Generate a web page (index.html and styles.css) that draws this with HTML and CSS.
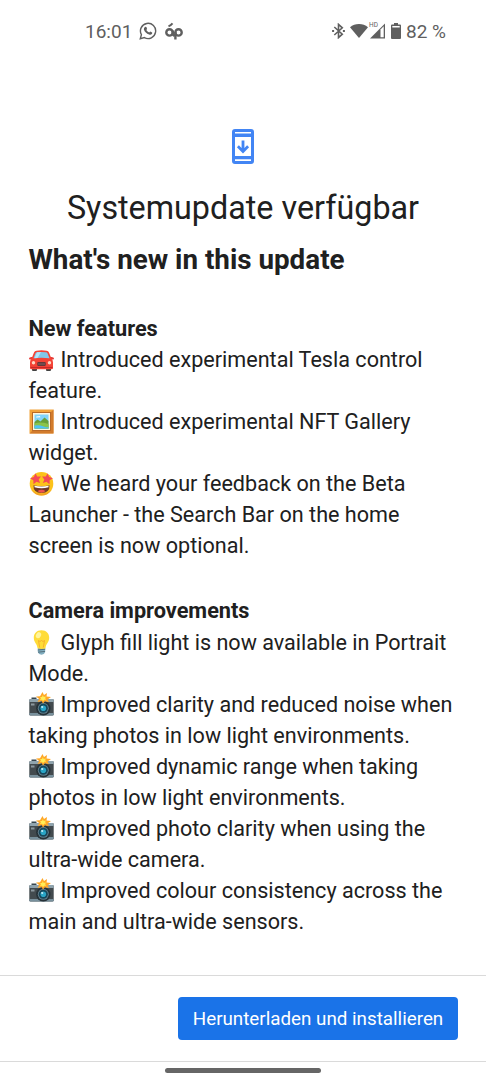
FILE: index.html
```html
<!DOCTYPE html>
<html lang="de">
<head>
	<meta charset="utf-8">
	<title>Systemupdate</title>
	<link rel="stylesheet" href="styles.css">
</head>
<body>
	<!-- emoji symbols -->
	<svg class="defs" width="0" height="0">
		<symbol id="car" viewBox="0 0 25 25">
			<path d="M3 19h5v4a1 1 0 0 1-1 1H4a1 1 0 0 1-1-1zM17 19h5v4a1 1 0 0 1-1 1h-3a1 1 0 0 1-1-1z" fill="#424242"/>
			<path d="M0 11.500q0-1.500 2.500-1.500h1.500v2.500H1q-1 0-1-1zM25 11.500q0-1.500-2.500-1.500H21v2.500h3q1 0 1-1z" fill="#e53935"/>
			<path d="M5 5.500Q5.600 4 7.500 3.700q5-.7 10 0 1.900.3 2.500 1.800l2.400 6q1.600 1.500 1.600 4V21q0 1.300-1.500 1.300h-20Q1 22.300 1 21v-5.500q0-2.500 1.600-4z" fill="#f44336"/>
			<path d="M6.500 6.200Q7 5.300 8 5.200q4.500-.6 9 0 1 .1 1.500 1l2 5.100q-8-1.300-16 0z" fill="#82c7e8"/>
			<path d="M8 5.300l4-.4-3.500 6-3 .3z" fill="#b3e5fc"/>
			<rect x="8.300" y="15" width="8.400" height="4" rx="1" fill="#5f3336"/>
			<path d="M9 16.300h7M9 17.700h7" stroke="#85686a" stroke-width=".6"/>
			<circle cx="4.500" cy="15.800" r="1.700" fill="#ffd9c4"/><circle cx="20.500" cy="15.800" r="1.700" fill="#ffd9c4"/>
			<path d="M1.500 20.500h22" stroke="#c62828" stroke-width="1.200"/>
		</symbol>
		<symbol id="frame" viewBox="0 0 25 25">
			<rect x=".5" y=".5" width="24" height="24" fill="#f2a33a"/>
			<path d="M.5 24.500l3.500-3.500h17l3.500 3.500zM24.500.5v24L21 21V4z" fill="#d27b2c"/>
			<rect x="3" y="3" width="19" height="19" fill="#b96a27"/>
			<rect x="4" y="4" width="17" height="17" fill="#fff7df"/>
			<rect x="5.500" y="5.500" width="14" height="14" fill="#81d4fa"/>
			<path d="M5.500 13l3-2.500 3 2 4-4 4 3.500v7.500h-14z" fill="#689f38"/>
			<path d="M5.500 14.500q6-2 14 .5v4.500h-14z" fill="#8bc34a"/>
			<path d="M5.500 16.500q5-1 8.500.7t5.500.8v1.500h-14z" fill="#4fc3f7"/>
			<path d="M7 8.500q.5-1.600 2-1 1.700-1.200 2.500.8z" fill="#fff"/>
		</symbol>
		<symbol id="starstruck" viewBox="0 0 25 25">
			<circle cx="12.500" cy="12.700" r="11.800" fill="#fcc21b"/>
			<path d="M2.500 19q3.500 5.500 10 5.500T22.500 19q-4.500 3.500-10 3.500T2.500 19z" fill="#f3a321"/>
			<path d="M4.500 14.200q8 2 16 0 .5 7.500-8 7.800-8.500-.3-8-7.800z" fill="#703b27"/>
			<path d="M5.500 14.700q7 1.500 14 0v1.600q-7 2.100-14 0z" fill="#fff"/>
			<path d="M8.500 20q4-2.400 8 0-1.800 1.700-4 1.700t-4-1.700z" fill="#ef5350"/>
			<path d="M6.500 2.200l1.700 3.400 3.800-.2-2.300 3 1.400 3.500-3.600-1.100-3 2.400-.2-3.900L1 7.300l3.800-1.200z" fill="#f44b55"/>
			<path d="M18.500 2.200l-1.700 3.400-3.800-.2 2.300 3-1.400 3.500 3.600-1.100 3 2.400.2-3.900L24 7.300l-3.800-1.200z" fill="#f44b55"/>
		</symbol>
		<symbol id="bulb" viewBox="0 0 25 25">
			<path d="M8.800 18h7.400v4q-.8 2.700-3.700 2.800-2.900-.1-3.700-2.800z" fill="#82aec0"/>
			<path d="M8.800 20l7.400-.8M9 22.200l7-.8" stroke="#546e7a" stroke-width="1"/>
			<path d="M12.500.3c4.800 0 7.700 3.300 7.700 7.500 0 4.700-3.200 5.700-3.700 10.200-.2 1.200-7.800 1.200-8 0C8 13.500 4.800 12.500 4.800 7.800c0-4.200 2.900-7.500 7.700-7.500z" fill="#ffdc38"/>
			<path d="M10.700 17.500L9.500 10.500l1.500 1 1.500-1 1.500 1 1.500-1-1.200 7" fill="none" stroke="#f4a62a" stroke-width=".8"/>
			<ellipse cx="9.500" cy="5.200" rx="2.400" ry="3.200" fill="#fff59d" transform="rotate(30 9.500 5.200)"/>
		</symbol>
		<symbol id="camera" viewBox="0 0 25 25">
			<path d="M2.500 5.500h5v2h-5z" fill="#37474f"/>
			<rect x=".3" y="7" width="24.400" height="16.500" rx="1.300" fill="#424a4e"/>
			<path d="M.3 10V8.300Q.3 7 1.600 7h21.800q1.300 0 1.300 1.300V10z" fill="#90a4ae"/>
			<path d="M.3 21h24.400v1.200q0 1.300-1.300 1.300H1.600q-1.300 0-1.300-1.300z" fill="#78909c"/>
			<rect x="2" y="11.500" width="3.500" height="2" fill="#8b989e"/>
			<circle cx="14.300" cy="16.300" r="7.200" fill="#263238"/>
			<circle cx="14.300" cy="16.300" r="5.500" fill="#607d8b"/>
			<circle cx="14.300" cy="16.300" r="4.500" fill="#16475b"/>
			<circle cx="14.300" cy="16.300" r="2.800" fill="#29a4c5"/>
			<circle cx="13.200" cy="15" r="1.100" fill="#c7edf7"/>
			<path d="M13.500 0l1.500 3 3-2-.5 3.500L22 5l-3.500 2.500L20 10l-4-.8-2 2.300-1.500-2.500L8.500 10l1.700-3L7 4.500l4-.2z" fill="#ffa726"/>
			<path d="M13.900 3l.8 2 2.200-.5-.8 1.800 1.200 1.200-2 .3-1.300 1.400-1-1.500-2 .2 1-1.600-1-1.300 2-.1z" fill="#ffee58"/>
		</symbol>
	</svg>

	<div class="phone">
		<header class="status">
			<div class="status-left">
				<span>16:01</span>
				<svg class="whatsapp" viewBox="0 0 18 18" fill="none" stroke="#5f5f5f">
					<path d="M1.300 16.700l1.100-4.100A7.600 7.600 0 1 1 5.400 15.600z" stroke-width="1.400"/>
					<path d="M6.200 4.700l1.200.3.700 1.900-.8 1q1.100 1.900 2.900 2.700l1-1 2 .9-.1 1.300q-1.200 1.300-3 .7-4-1.300-5.200-5-.3-1.700 1.300-2.800z" fill="#5f5f5f" stroke="none"/>
				</svg>
				<svg class="op" viewBox="0 0 18 18" fill="none" stroke="#5f5f5f" stroke-width="2.400">
					<circle cx="4.500" cy="10.400" r="3.200"/>
					<circle cx="13.500" cy="10.400" r="3.200"/>
					<path d="M3.500 4.300Q5.500 3.700 7.500 1.300" stroke-width="2"/>
					<path d="M7.800 8.500v3q0 2.200 2.500 2.200M10.400 10v7.500"/>
				</svg>
			</div>
			<div class="status-right">
				<svg class="bt" viewBox="0 0 13 16" fill="none" stroke="#5f5f5f" stroke-width="1.600">
					<path d="M2.300 4l8 7.200-3.800 3.400V1.400l3.800 3.400-8 7.200"/>
					<path d="M.1 8h2M10.900 8h2" stroke-width="2"/>
				</svg>
				<svg class="wifi" viewBox="0 0 18 14"><path d="M9 14L0 3.300Q3.900 0 9 0t9 3.300z" fill="#5f5f5f"/></svg>
				<div class="signal">
					<span class="hd">HD</span>
					<svg viewBox="0 0 16 16"><path d="M0 15.500L15 .5v15z" fill="#5f5f5f"/><path d="M10.500 6.500l3.200-3.200v10.900h-3.200z" fill="#fff"/></svg>
				</div>
				<svg class="battery" viewBox="0 0 10 16"><path d="M3 0h4v1.500h2q1 0 1 1V15q0 1-1 1H1q-1 0-1-1V2.500q0-1 1-1h2z" fill="#5f5f5f"/><path d="M1.300 3h7.400v1.500H1.300z" fill="#fff"/></svg>
				<span>82 %</span>
			</div>
		</header>

		<main>
			<svg class="update-icon" viewBox="0 0 22 35">
				<path fill-rule="evenodd" d="M3 0h16q3 0 3 3v29q0 3-3 3H3q-3 0-3-3V3q0-3 3-3zM3 3v1.500h16V3zM3 8v19h16V8zM3 30.300V32h16v-1.700z" fill="#4285f4"/>
				<path d="M11 11.500v11M5.900 17.300l5.100 5.100 5.100-5.100" fill="none" stroke="#4285f4" stroke-width="2.800"/>
			</svg>
			<h1>Systemupdate verfügbar</h1>
			<h2>What's new in this update</h2>

			<section class="notes">
				<h3>New features</h3>
				<p><svg class="emoji"><use href="#car"/></svg>Introduced experimental Tesla control<br>feature.</p>
				<p><svg class="emoji"><use href="#frame"/></svg>Introduced experimental NFT Gallery<br>widget.</p>
				<p><svg class="emoji"><use href="#starstruck"/></svg>We heard your feedback on the Beta<br>Launcher - the Search Bar on the home<br>screen is now optional.</p>
			</section>

			<section class="notes">
				<h3>Camera improvements</h3>
				<p><svg class="emoji"><use href="#bulb"/></svg>Glyph fill light is now available in Portrait<br>Mode.</p>
				<p><svg class="emoji"><use href="#camera"/></svg>Improved clarity and reduced noise when<br>taking photos in low light environments.</p>
				<p><svg class="emoji"><use href="#camera"/></svg>Improved dynamic range when taking<br>photos in low light environments.</p>
				<p><svg class="emoji"><use href="#camera"/></svg>Improved photo clarity when using the<br>ultra-wide camera.</p>
				<p><svg class="emoji"><use href="#camera"/></svg>Improved colour consistency across the<br>main and ultra-wide sensors.</p>
			</section>
		</main>

		<footer class="actions">
			<button class="install">Herunterladen und installieren</button>
		</footer>
		<div class="navbar"><div class="handle"></div></div>
	</div>
</body>
</html>
```
FILE: styles.css
```css
* { margin: 0; padding: 0; box-sizing: border-box; }
body { background: #fff; color: #202020; font-family: Roboto, sans-serif; }
.defs { position: absolute; }
.phone { width: 486px; height: 1080px; display: flex; flex-direction: column; overflow: hidden; }

.status { height: 62px; padding: 0 40px 0 85px; display: flex; justify-content: space-between; align-items: center; color: #5f5f5f; font-size: 19px; }
.status-left, .status-right { display: flex; align-items: center; }
.whatsapp { width: 18px; height: 18px; margin-left: 7px; }
.op { width: 18px; height: 18px; margin-left: 8px; }
.bt { width: 13px; height: 16px; }
.wifi { width: 18px; height: 14px; margin-left: 5px; }
.signal { position: relative; width: 18px; height: 16px; }
.signal svg { width: 16px; height: 16px; margin-left: 2px; display: block; }
.hd { position: absolute; left: 1px; top: -1px; font-size: 6.500px; line-height: 7px; }
.battery { width: 10px; height: 16px; margin: 0 5px 0 5px; }

main { flex: 1; padding: 67px 28px 0; }
.update-icon { display: block; width: 22px; height: 35px; margin: 0 auto; }
h1 { margin-top: 22px; font-size: 32.300px; line-height: 44px; font-weight: 400; text-align: center; white-space: nowrap; }
h2 { margin-top: 11px; font-size: 27.800px; line-height: 38px; font-weight: 700; padding-left: .5px; white-space: nowrap; }
.notes { margin-top: 34px; padding-left: .5px; font-size: 21.580px; line-height: 31px; white-space: nowrap; }
h3 { font-size: 21.700px; line-height: 31px; font-weight: 700; }
.notes + .notes h3 { line-height: 32px; }
.emoji { width: 25px; height: 25px; margin: 0 6.500px 0 .5px; vertical-align: -5px; }

.actions { height: 87px; border-top: 1px solid #dadada; border-bottom: 1px solid #dadada; display: flex; align-items: center; justify-content: flex-end; padding-right: 28px; }
.install { width: 280px; height: 43px; border: 0; border-radius: 4px; background: #1a73e8; color: #fff; font-family: Roboto, sans-serif; font-size: 18.800px; white-space: nowrap; }
.navbar { height: 18px; padding-top: 6px; }
.handle { width: 156px; height: 5px; margin: 0 auto; border-radius: 3px; background: #666; }
```
